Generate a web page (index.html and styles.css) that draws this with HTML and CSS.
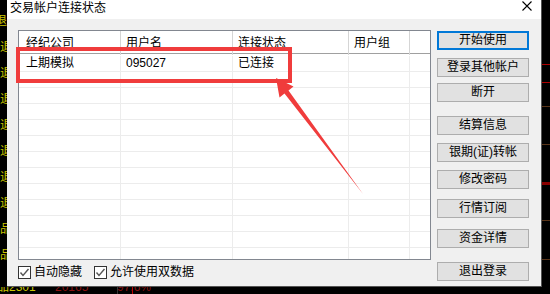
FILE: index.html
```html
<!DOCTYPE html>
<html lang="zh-CN">
<head>
    <meta charset="UTF-8">
    <title>交易帐户连接状态</title>
    <link rel="stylesheet" href="styles.css">
</head>
<body>
    <div class="screen">
        <!-- 背景行情窗口（左侧露出的部分） -->
        <div class="bg-left">退<br>退<br>退<br>退<br>退<br>退<br>退<br>退<br>品<br>品</div>

        <div class="window">
            <div class="titlebar">
                <span class="title">交易帐户连接状态</span>
                <svg class="close" width="10" height="10" viewBox="0 0 10 10">
                    <path d="M0.5 0.5 L9.5 9.5 M9.5 0.5 L0.5 9.5" stroke="#000" stroke-width="1.1" fill="none"/>
                </svg>
            </div>

            <div class="content">
                <div class="main">
                    <div class="list">
                        <div class="row head">
                            <div class="cell">经纪公司</div>
                            <div class="cell">用户名</div>
                            <div class="cell">连接状态</div>
                            <div class="cell">用户组</div>
                            <div class="cell"></div>
                        </div>
                        <div class="row first">
                            <div class="cell">上期模拟</div>
                            <div class="cell">095027</div>
                            <div class="cell">已连接</div>
                            <div class="cell"></div>
                            <div class="cell"></div>
                        </div>
                        <div class="row"><div class="cell"></div><div class="cell"></div><div class="cell"></div><div class="cell"></div><div class="cell"></div></div>
                        <div class="row"><div class="cell"></div><div class="cell"></div><div class="cell"></div><div class="cell"></div><div class="cell"></div></div>
                        <div class="row"><div class="cell"></div><div class="cell"></div><div class="cell"></div><div class="cell"></div><div class="cell"></div></div>
                        <div class="row"><div class="cell"></div><div class="cell"></div><div class="cell"></div><div class="cell"></div><div class="cell"></div></div>
                        <div class="row"><div class="cell"></div><div class="cell"></div><div class="cell"></div><div class="cell"></div><div class="cell"></div></div>
                        <div class="row"><div class="cell"></div><div class="cell"></div><div class="cell"></div><div class="cell"></div><div class="cell"></div></div>
                        <div class="row"><div class="cell"></div><div class="cell"></div><div class="cell"></div><div class="cell"></div><div class="cell"></div></div>
                        <div class="row"><div class="cell"></div><div class="cell"></div><div class="cell"></div><div class="cell"></div><div class="cell"></div></div>
                        <div class="row"><div class="cell"></div><div class="cell"></div><div class="cell"></div><div class="cell"></div><div class="cell"></div></div>
                        <div class="row"><div class="cell"></div><div class="cell"></div><div class="cell"></div><div class="cell"></div><div class="cell"></div></div>
                        <div class="row"><div class="cell"></div><div class="cell"></div><div class="cell"></div><div class="cell"></div><div class="cell"></div></div>
                        <div class="row last"><div class="cell"></div><div class="cell"></div><div class="cell"></div><div class="cell"></div><div class="cell"></div></div>
                    </div>

                    <div class="options">
                        <label class="check">
                            <span class="box"><svg width="11" height="11" viewBox="0 0 11 11"><path d="M1.5 5.5 L4 8.5 L9.5 2" stroke="#555" stroke-width="1.4" fill="none"/></svg></span>
                            自动隐藏
                        </label>
                        <label class="check">
                            <span class="box"><svg width="11" height="11" viewBox="0 0 11 11"><path d="M1.5 5.5 L4 8.5 L9.5 2" stroke="#555" stroke-width="1.4" fill="none"/></svg></span>
                            允许使用双数据
                        </label>
                    </div>
                </div>

                <div class="buttons">
                    <button class="btn default">开始使用</button>
                    <button class="btn gap8">登录其他帐户</button>
                    <button class="btn gap6">断开</button>
                    <button class="btn gap14">结算信息</button>
                    <button class="btn gap8">银期(证)转帐</button>
                    <button class="btn gap8">修改密码</button>
                    <button class="btn gap10">行情订阅</button>
                    <button class="btn gap11">资金详情</button>
                    <button class="btn gap14">退出登录</button>
                </div>
            </div>
        </div>

        <div class="bg-right"></div>
    </div>

    <div class="bg-bottom">
        <span class="yel">品2301</span>
        <span class="red">20165</span>
        <span class="red">97.6%</span>
        <span class="tick grey"></span>
        <span class="tick redline"></span>
    </div>

    <!-- 截图标注：红框和箭头 -->
    <div class="highlight"></div>
    <svg class="arrow" width="550" height="294" viewBox="0 0 550 294">
        <polygon points="276,78 293.5,86.5 288.5,90.5 363,194 284.5,93.5 279.5,97.5" fill="#f03c3c"/>
    </svg>
</body>
</html>
```

FILE: styles.css
```css
body {
    margin: 0;
    width: 550px;
    height: 294px;
    overflow: hidden;
    background: #000;
    font-family: "Liberation Sans", "Noto Sans CJK SC", sans-serif;
    font-size: 12px;
    color: #000;
    position: relative;
}

.screen {
    display: flex;
    height: 287px;
}

/* 背景里的行情软件 */
.bg-left {
    width: 7px;
    overflow: hidden;
    color: #c8c400;
    line-height: 26px;
    padding-top: 8px;
    text-indent: -5px;
    white-space: nowrap;
}

.bg-right {
    flex: 1;
    background:
        linear-gradient(#b00000, #b00000) 0 64px / 100% 1px no-repeat,
        linear-gradient(#b00000, #b00000) 0 82px / 100% 1px no-repeat,
        linear-gradient(#5a3418, #5a3418) 0 106px / 100% 1px no-repeat,
        linear-gradient(#5a3418, #5a3418) 0 144px / 100% 1px no-repeat,
        linear-gradient(#8a0000, #8a0000) 0 182px / 100% 3px no-repeat,
        linear-gradient(#5a3418, #5a3418) 0 220px / 100% 1px no-repeat,
        linear-gradient(#5a3418, #5a3418) 0 259px / 100% 1px no-repeat,
        #000;
}

.bg-bottom {
    height: 7px;
    overflow: hidden;
    display: flex;
    line-height: 12px;
    white-space: nowrap;
}

.bg-bottom span {
    margin-top: -6px;
}

.bg-bottom .yel {
    color: #c8c400;
    margin-left: -3px;
    width: 58px;
}

.bg-bottom .red {
    color: #8a1010;
    width: 62px;
}

.bg-bottom .tick {
    width: 1px;
    height: 7px;
    margin-top: 0;
}

.bg-bottom .grey {
    background: #333;
    margin-left: -62px;
}

.bg-bottom .redline {
    background: #c00000;
    margin-left: 14px;
}

/* 对话框 */
.window {
    width: 535px;
    height: 287px;
    box-sizing: border-box;
    background: #f0f0f0;
    border-right: 1px solid #555;
    border-bottom: 1px solid #555;
    display: flex;
    flex-direction: column;
}

.titlebar {
    height: 19px;
    background: #fff;
    display: flex;
    justify-content: space-between;
    align-items: flex-start;
    flex-shrink: 0;
}

.title {
    margin-left: 3px;
    line-height: 14px;
    font-family: "Noto Sans CJK SC", sans-serif;
}

.close {
    margin: 1px 9px 0 0;
}

.content {
    display: flex;
    padding: 11px 0 0 11px;
}

.main {
    display: flex;
    flex-direction: column;
}

/* 列表 */
.list {
    width: 413px;
    height: 230px;
    box-sizing: border-box;
    border: 1px solid #828790;
    background: #fff;
    overflow: hidden;
}

.row {
    display: grid;
    grid-template-columns: 102px 112px 116px 61px 1fr;
    height: 16px;
    box-sizing: border-box;
    border-bottom: 1px solid #ececec;
    line-height: 15px;
}

.cell {
    border-right: 1px solid #ececec;
    padding-left: 5px;
    white-space: nowrap;
}

.cell:first-child {
    padding-left: 7px;
}

.cell:last-child {
    border-right: none;
}

.row.head {
    height: 23px;
    line-height: 24px;
    border-bottom-color: #a0a0a0;
}

.row.head .cell {
    border-right-color: #d5d5d5;
}

.row.head .cell:last-child {
    border-right: none;
}

.row.first {
    height: 18px;
    padding-top: 2px;
}

.row.last {
    height: 40px;
    border-bottom: none;
}

/* 复选框 */
.options {
    display: flex;
    gap: 12px;
    margin-top: 6px;
    height: 13px;
    line-height: 13px;
}

.check {
    display: flex;
    align-items: center;
    gap: 3px;
}

.box {
    width: 13px;
    height: 13px;
    box-sizing: border-box;
    border: 1px solid #333;
    background: #fff;
    display: flex;
    align-items: center;
    justify-content: center;
}

/* 按钮 */
.buttons {
    display: flex;
    flex-direction: column;
    margin: 1px 0 0 6px;
}

.btn {
    width: 92px;
    height: 19px;
    box-sizing: border-box;
    padding: 0;
    border: 1px solid #adadad;
    background: #e1e1e1;
    font-family: "Liberation Sans", "Noto Sans CJK SC", sans-serif;
    font-size: 12px;
    line-height: 17px;
    color: #000;
    text-align: center;
}

.btn.default {
    border: 2px solid #0078d7;
    line-height: 15px;
}

.gap6 { margin-top: 6px; }
.gap8 { margin-top: 8px; }
.gap10 { margin-top: 10px; }
.gap11 { margin-top: 11px; }
.gap14 { margin-top: 14px; }

/* 标注 */
.highlight {
    position: absolute;
    left: 16px;
    top: 47px;
    width: 276px;
    height: 36px;
    box-sizing: border-box;
    border: 4px solid #f03c3c;
}

.arrow {
    position: absolute;
    left: 0;
    top: 0;
}
```
